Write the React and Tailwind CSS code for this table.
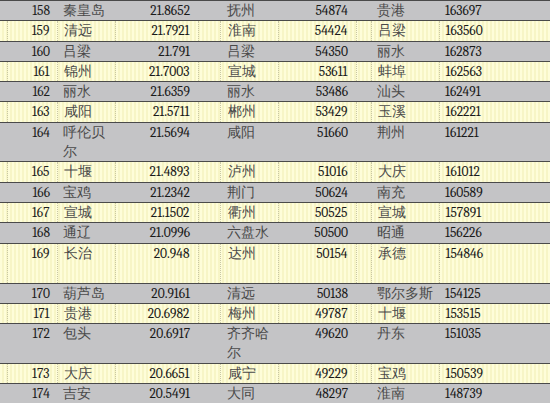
import React from "react";

const rows = [
  [158, "秦皇岛", "21.8652", "抚州", "54874", "贵港", "163697"],
  [159, "清远", "21.7921", "淮南", "54424", "吕梁", "163560"],
  [160, "吕梁", "21.791", "吕梁", "54350", "丽水", "162873"],
  [161, "锦州", "21.7003", "宣城", "53611", "蚌埠", "162563"],
  [162, "丽水", "21.6359", "丽水", "53486", "汕头", "162491"],
  [163, "咸阳", "21.5711", "郴州", "53429", "玉溪", "162221"],
  [164, "呼伦贝尔", "21.5694", "咸阳", "51660", "荆州", "161221"],
  [165, "十堰", "21.4893", "泸州", "51016", "大庆", "161012"],
  [166, "宝鸡", "21.2342", "荆门", "50624", "南充", "160589"],
  [167, "宣城", "21.1502", "衢州", "50525", "宣城", "157891"],
  [168, "通辽", "21.0996", "六盘水", "50500", "昭通", "156226"],
  [169, "长治", "20.948", "达州", "50154", "承德", "154846", true],
  [170, "葫芦岛", "20.9161", "清远", "50138", "鄂尔多斯", "154125"],
  [171, "贵港", "20.6982", "梅州", "49787", "十堰", "153515"],
  [172, "包头", "20.6917", "齐齐哈尔", "49620", "丹东", "151035"],
  [173, "大庆", "20.6651", "咸宁", "49229", "宝鸡", "150539"],
  [174, "吉安", "20.5491", "大同", "48297", "淮南", "148739"],
];

const widths = [7, 50, 58, 83, 22, 58, 78, 15, 68, 111];

const font = "font-serif text-[13.5px] leading-[19.3px] font-normal";

export default function App() {
  return (
    <div className={"w-[550px] h-[403px] overflow-hidden bg-[#c4c4c6] " + font}>
      <table className={"table-fixed border-collapse w-[550px] " + font}>
        <colgroup>
          {widths.map((w, i) => (
            <col key={i} style={{ width: w }} />
          ))}
        </colgroup>
        <tbody>
          {rows.map((r) => {
            const odd = r[0] % 2 === 1;
            const cell =
              font +
              (odd
                ? " align-top border-l border-dotted border-l-[#c9c7a4]"
                : " align-top");
            return (
              <tr
                key={r[0]}
                className={
                  (odd
                    ? "bg-[repeating-linear-gradient(90deg,#fefdd9_0px,#fefdd9_2px,#f7f5c6_2px,#f7f5c6_4px)] "
                    : "bg-[#c4c4c6] ") +
                  "border-t border-t-[#4a4a4a] " +
                  (r[7] ? "h-[40px]" : "")
                }
              >
                <td className={font + " align-top"}></td>
                <td className={cell + " text-right pr-[7px] text-[#1e1e1e]"}>{r[0]}</td>
                <td className={cell + " pl-[6px] pr-[2px] text-[#4a4a4a]"}>{r[1]}</td>
                <td className={cell + " text-right pr-[8px] text-[#1a1a1a]"}>{r[2]}</td>
                <td className={cell}></td>
                <td className={cell + " pl-[7px] pr-[2px] text-[#4a4a4a]"}>{r[3]}</td>
                <td className={cell + " text-right pr-[8px] text-[#1a1a1a]"}>{r[4]}</td>
                <td className={cell}></td>
                <td className={cell + " pl-[6px] text-[#4a4a4a]"}>{r[5]}</td>
                <td className={cell + " pl-[6px] text-[#1a1a1a]"}>{r[6]}</td>
              </tr>
            );
          })}
        </tbody>
      </table>
    </div>
  );
}
